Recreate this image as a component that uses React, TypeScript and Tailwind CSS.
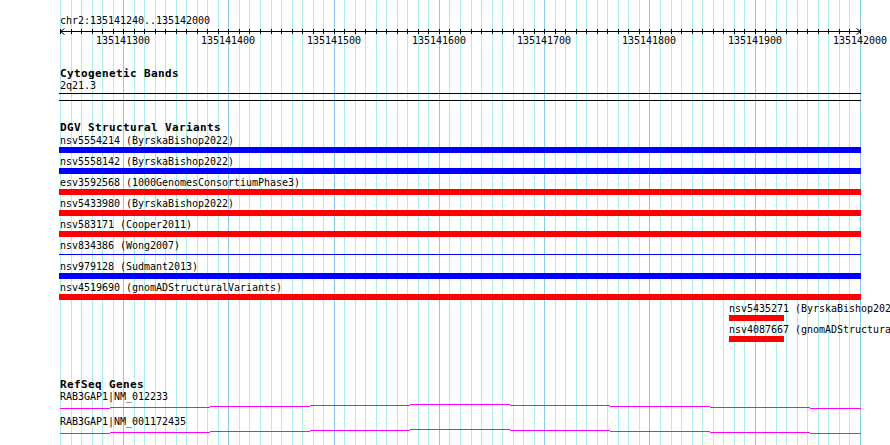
import React from 'react';

const START = 135141240;
const END = 135142000;
const X0 = 60;
const X1 = 860;
const toX = (bp: number) => X0 + ((bp - START) * (X1 - X0)) / (END - START);

type Variant = {
  id: string;
  source: string;
  color: 'blue' | 'red';
  thin?: boolean;
  from?: number;
  to?: number;
};

const variants: Variant[] = [
  { id: 'nsv5554214', source: 'ByrskaBishop2022', color: 'blue' },
  { id: 'nsv5558142', source: 'ByrskaBishop2022', color: 'blue' },
  { id: 'esv3592568', source: '1000GenomesConsortiumPhase3', color: 'red' },
  { id: 'nsv5433980', source: 'ByrskaBishop2022', color: 'red' },
  { id: 'nsv583171', source: 'Cooper2011', color: 'red' },
  { id: 'nsv834386', source: 'Wong2007', color: 'blue', thin: true },
  { id: 'nsv979128', source: 'Sudmant2013', color: 'blue' },
  { id: 'nsv4519690', source: 'gnomADStructuralVariants', color: 'red' },
  { id: 'nsv5435271', source: 'ByrskaBishop2022', color: 'red', from: 729, to: 784 },
  { id: 'nsv4087667', source: 'gnomADStructuralVariants', color: 'red', from: 729, to: 784 },
];

// exon-ish steps of the refseq lines: [x1, x2, y]
const geneSteps: [number, number, number][] = [
  [60, 110, 5],
  [110, 210, 4],
  [210, 310, 3],
  [310, 410, 2],
  [410, 510, 1],
  [510, 610, 2],
  [610, 710, 3],
  [710, 810, 4],
  [810, 861, 5],
];

const genes = ['RAB3GAP1|NM_012233', 'RAB3GAP1|NM_001172435'];

const gridTicks: number[] = [];
for (let bp = START; bp <= END; bp += 10) gridTicks.push(bp);
const majorTicks = gridTicks.filter((bp) => bp % 100 === 0);

const small = "font-['DejaVu_Sans_Mono',monospace] text-[10px] leading-[12px] tracking-[-0.02px] whitespace-nowrap text-black";
const title = "font-['DejaVu_Sans_Mono',monospace] text-[11px] leading-[12px] tracking-[0.38px] font-bold whitespace-nowrap text-black";

function Grid() {
  return (
    <svg className="absolute inset-0" width={890} height={445}>
      {gridTicks.map((bp) => {
        const x = Math.round(toX(bp)) + 0.5;
        return (
          <line
            key={bp}
            x1={x}
            x2={x}
            y1={0}
            y2={445}
            stroke={bp % 100 === 0 ? '#88ccee' : '#aaeeee'}
            strokeWidth={1}
          />
        );
      })}
    </svg>
  );
}

function Ruler() {
  return (
    <div className="flex flex-col">
      <div className={`${small} ml-[60px]`}>chr2:135141240..135142000</div>
      <svg width={890} height={8} className="block">
        <line x1={60} x2={861} y1={4.5} y2={4.5} stroke="#000" />
        {gridTicks.map((bp) => {
          const x = Math.round(toX(bp)) + 0.5;
          return <line key={bp} x1={x} x2={x} y1={2} y2={7} stroke="#000" />;
        })}
        <polyline points="64.5,1.5 60.5,4.5 64.5,7.5" fill="none" stroke="#000" />
        <polyline points="856.5,1.5 860.5,4.5 856.5,7.5" fill="none" stroke="#000" />
      </svg>
      <div className="relative h-[12px]">
        {majorTicks.map((bp) => (
          <span
            key={bp}
            className={`${small} absolute top-0 -translate-x-1/2`}
            style={{ left: Math.round(toX(bp)) }}
          >
            {bp}
          </span>
        ))}
      </div>
    </div>
  );
}

function VariantRow({ v }: { v: Variant }) {
  const left = v.from ?? 59;
  const width = (v.to ?? 861) - left;
  const bg = v.color === 'blue' ? 'bg-[#0000ff]' : 'bg-[#ff0000]';
  return (
    <div className="flex flex-col h-[21px]">
      <div className={small} style={{ marginLeft: v.from ?? 60 }}>
        {v.id} ({v.source})
      </div>
      {v.thin ? (
        <div className="h-[6px] pt-[2px]">
          <div className={`h-[1px] ${bg}`} style={{ marginLeft: left, width }} />
        </div>
      ) : (
        <div className={`h-[6px] ${bg}`} style={{ marginLeft: left, width }} />
      )}
    </div>
  );
}

function GeneRow({ name }: { name: string }) {
  return (
    <div className="flex flex-col">
      <div className={`${small} ml-[60px]`}>{name}</div>
      <svg width={890} height={13} className="block">
        {geneSteps.map(([a, b, y]) => (
          <line key={a} x1={a} x2={b} y1={y + 0.5} y2={y + 0.5} stroke="#ff00ff" />
        ))}
      </svg>
    </div>
  );
}

export default function App() {
  return (
    <div className="relative w-[890px] h-[445px] overflow-hidden bg-white">
      <Grid />
      <div className="relative flex flex-col pt-[15px]">
        <Ruler />

        <div className={`${title} ml-[60px] mt-[21px]`}>Cytogenetic Bands</div>
        <div className={`${small} ml-[60px]`}>2q21.3</div>
        <div className="ml-[59px] mt-[1px] w-[802px] h-[8px] border-y border-black" />

        <div className={`${title} ml-[60px] mt-[21px]`}>DGV Structural Variants</div>
        <div className="flex flex-col mt-[1px]">
          {variants.map((v) => (
            <VariantRow key={v.id} v={v} />
          ))}
        </div>

        <div className={`${title} ml-[60px] mt-[34px]`}>RefSeq Genes</div>
        {genes.map((g) => (
          <GeneRow key={g} name={g} />
        ))}
      </div>
    </div>
  );
}
